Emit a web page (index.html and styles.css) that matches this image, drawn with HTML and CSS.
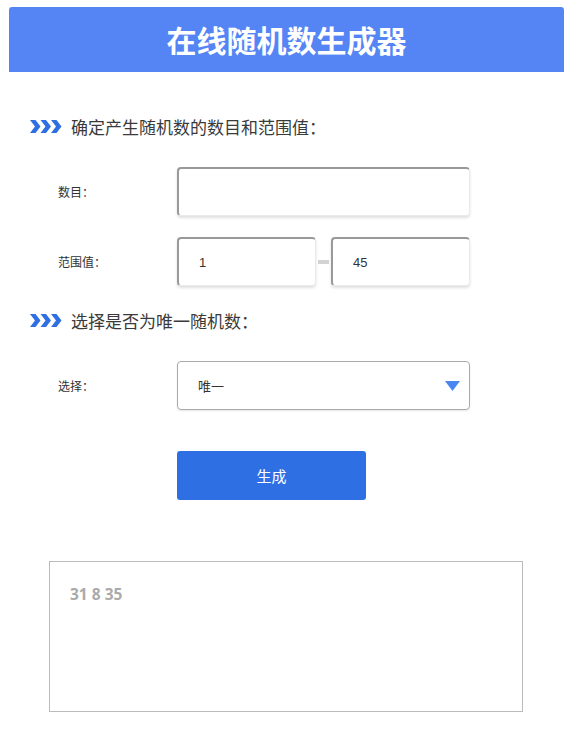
FILE: index.html
```html
<!DOCTYPE html>
<html lang="zh">
<head>
<meta charset="utf-8">
<title>在线随机数生成器</title>
<link rel="stylesheet" href="styles.css">
</head>
<body>
<header class="header"><h1 class="title">在线随机数生成器</h1></header>
<main class="main">
  <h2 class="section-title">
    <svg class="chev" width="32" height="13" viewBox="0 0 32 13"><path d="M0 0h5.5l5 6.5-5 6.5H0l5-6.5z M10.5 0h5.5l5 6.5-5 6.5h-5.5l5-6.5z M21 0h5.5l5 6.5-5 6.5H21l5-6.5z" fill="#2f6fe4"/></svg>
    <span>确定产生随机数的数目和范围值：</span>
  </h2>
  <div class="row row-first">
    <label class="label">数目：</label>
    <input class="field field-wide" type="text" value="">
  </div>
  <div class="row">
    <label class="label">范围值：</label>
    <div class="range">
      <input class="field field-half" type="text" value="1">
      <span class="dash"></span>
      <input class="field field-half" type="text" value="45">
    </div>
  </div>
  <h2 class="section-title section-second">
    <svg class="chev" width="32" height="13" viewBox="0 0 32 13"><path d="M0 0h5.5l5 6.5-5 6.5H0l5-6.5z M10.5 0h5.5l5 6.5-5 6.5h-5.5l5-6.5z M21 0h5.5l5 6.5-5 6.5H21l5-6.5z" fill="#2f6fe4"/></svg>
    <span>选择是否为唯一随机数：</span>
  </h2>
  <div class="row row-first">
    <label class="label">选择：</label>
    <div class="select">
      <span>唯一</span>
      <svg width="15" height="10" viewBox="0 0 15 10"><path d="M0 0h15L7.5 10z" fill="#4a85f0"/></svg>
    </div>
  </div>
  <div class="actions">
    <button class="btn" type="button">生成</button>
  </div>
  <div class="result">31 8 35</div>
</main>
</body>
</html>
```
FILE: styles.css
```css
* { box-sizing: border-box; }
body {
  margin: 0;
  background: #fff;
  font-family: "Noto Sans CJK SC", "Noto Sans", sans-serif;
  color: #333;
}
.header {
  margin: 7px 14px 0 9px;
  height: 65px;
  background: #5585f5;
  border-radius: 3px 3px 0 0;
  display: flex;
  align-items: center;
  justify-content: center;
}
.title {
  margin: 0;
  color: #fff;
  font-size: 30px;
  font-weight: 700;
  line-height: 1;
  padding-bottom: 2px;
}
.main {
  padding: 0 0 0 30px;
}
.section-title {
  margin: 42px 0 0 0;
  display: flex;
  align-items: center;
  gap: 9px;
  height: 24px;
  font-size: 17px;
  font-weight: 400;
  color: #3a3a3a;
}
.section-second {
  margin-top: 22px;
}
.chev { flex: none; }
.row {
  display: flex;
  align-items: center;
  margin-top: 21px;
  padding-left: 28px;
}
.row-first { margin-top: 29px; }
.label {
  width: 119px;
  font-size: 12px;
  color: #333;
}
.field {
  height: 49px;
  border-style: solid;
  border-width: 2px 1px 1px 2px;
  border-color: #999 #eaeaea #eaeaea #999;
  border-radius: 4px;
  box-shadow: 0 2px 3px rgba(0,0,0,0.13);
  background: #fff;
  font-family: "Liberation Sans", Arial, sans-serif;
  font-size: 13px;
  color: #333;
  padding: 0 0 0 20px;
  outline: none;
}
.field-wide { width: 293px; }
.range {
  display: flex;
  align-items: center;
}
.field-half { width: 139px; }
.dash {
  width: 11px;
  height: 4px;
  background: #d3d3d3;
  margin: 0 2px;
}
.select {
  width: 293px;
  height: 49px;
  border: 1px solid #aaa;
  border-radius: 4px;
  box-shadow: 0 1px 2px rgba(0,0,0,0.1);
  display: flex;
  align-items: center;
  justify-content: space-between;
  padding: 0 9px 0 20px;
  font-size: 13px;
  color: #333;
}
.actions {
  padding-left: 147px;
  margin-top: 41px;
}
.btn {
  width: 189px;
  height: 49px;
  border: none;
  border-radius: 3px;
  background: #2f6fe4;
  color: #fff;
  font-family: "Noto Sans CJK SC", sans-serif;
  font-size: 15px;
}
.result {
  margin: 61px 0 0 19px;
  width: 474px;
  height: 151px;
  border: 1px solid #bbb;
  padding: 21px 0 0 20px;
  font-family: "Open Sans", sans-serif;
  font-weight: 700;
  font-size: 15.5px;
  color: #aaa;
}
```
